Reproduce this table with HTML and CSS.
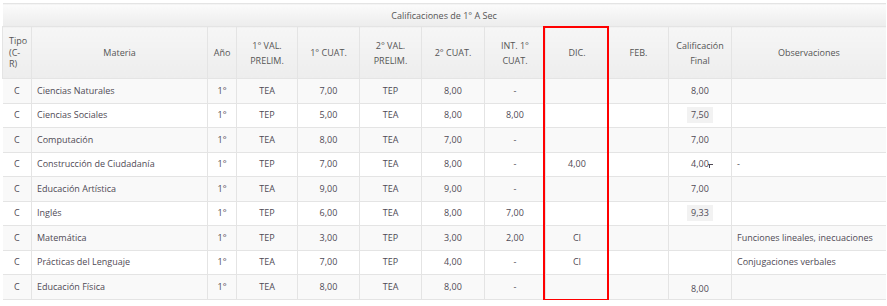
FILE: index.html
```html
<!DOCTYPE html>
<html lang="es">
<head>
<meta charset="utf-8">
<title>Calificaciones</title>
<link rel="stylesheet" href="styles.css">
</head>
<body>
<div class="wrap">
  <table class="grades">
    <colgroup>
      <col class="c-tipo"><col class="c-materia"><col class="c-anio"><col class="c-n1"><col class="c-n2"><col class="c-n3"><col class="c-n4"><col class="c-n5"><col class="c-n6"><col class="c-n7"><col class="c-n8"><col class="c-obs">
    </colgroup>
    <thead>
      <tr class="title-row"><th colspan="12">Calificaciones de 1° A Sec</th></tr>
      <tr class="head-row">
        <th class="tipo-h">Tipo<br>(C-<br>R)</th>
        <th>Materia</th>
        <th>Año</th>
        <th>1° VAL.<br>PRELIM.</th>
        <th>1° CUAT.</th>
        <th>2° VAL.<br>PRELIM.</th>
        <th>2° CUAT.</th>
        <th>INT. 1°<br>CUAT.</th>
        <th>DIC.</th>
        <th>FEB.</th>
        <th>Calificación<br>Final</th>
        <th>Observaciones</th>
      </tr>
    </thead>
    <tbody>
      <tr><td>C</td><td class="left">Ciencias Naturales</td><td>1°</td><td>TEA</td><td>7,00</td><td>TEP</td><td>8,00</td><td>-</td><td></td><td></td><td class="final"><span class="hl">8,00</span></td><td class="left"></td></tr>
      <tr><td>C</td><td class="left">Ciencias Sociales</td><td>1°</td><td>TEP</td><td>5,00</td><td>TEA</td><td>8,00</td><td>8,00</td><td></td><td></td><td class="final"><span class="hl box">7,50</span></td><td class="left"></td></tr>
      <tr><td>C</td><td class="left">Computación</td><td>1°</td><td>TEA</td><td>8,00</td><td>TEA</td><td>7,00</td><td>-</td><td></td><td></td><td class="final"><span class="hl">7,00</span></td><td class="left"></td></tr>
      <tr><td>C</td><td class="left">Construcción de Ciudadanía</td><td>1°</td><td>TEP</td><td>7,00</td><td>TEA</td><td>8,00</td><td>-</td><td>4,00</td><td></td><td class="final"><span class="hl cursor-host">4,00<span class="caret"></span></span></td><td class="left">-</td></tr>
      <tr><td>C</td><td class="left">Educación Artística</td><td>1°</td><td>TEA</td><td>9,00</td><td>TEA</td><td>9,00</td><td>-</td><td></td><td></td><td class="final"><span class="hl">7,00</span></td><td class="left"></td></tr>
      <tr><td>C</td><td class="left">Inglés</td><td>1°</td><td>TEP</td><td>6,00</td><td>TEA</td><td>8,00</td><td>7,00</td><td></td><td></td><td class="final"><span class="hl box">9,33</span></td><td class="left"></td></tr>
      <tr><td>C</td><td class="left">Matemática</td><td>1°</td><td>TEP</td><td>3,00</td><td>TEP</td><td>3,00</td><td>2,00</td><td>CI</td><td></td><td class="final"></td><td class="left">Funciones lineales, inecuaciones</td></tr>
      <tr><td>C</td><td class="left">Prácticas del Lenguaje</td><td>1°</td><td>TEA</td><td>7,00</td><td>TEP</td><td>4,00</td><td>-</td><td>CI</td><td></td><td class="final"></td><td class="left">Conjugaciones verbales</td></tr>
      <tr><td>C</td><td class="left">Educación Física</td><td>1°</td><td>TEA</td><td>8,00</td><td>TEA</td><td>8,00</td><td>-</td><td></td><td></td><td class="final"><span class="hl low">8,00</span></td><td class="left"></td></tr>
    </tbody>
  </table>
  <div class="dic-mark"></div>
</div>
</body>
</html>
```
FILE: styles.css
```css
html, body {
  margin: 0;
  padding: 0;
  background: #ffffff;
}
body {
  font-family: "Open Sans", "Liberation Sans", sans-serif;
  font-size: 9px;
  color: #4f4a55;
}
.wrap {
  position: relative;
  padding: 3px 2px 0 2px;
}
.grades {
  width: 883px;
  border-collapse: collapse;
  table-layout: fixed;
}
.c-tipo { width: 29px; }
.c-materia { width: 176px; }
.c-anio { width: 29px; }
.c-n1 { width: 61px; }
.c-n2 { width: 62px; }
.c-n3 { width: 62px; }
.c-n4 { width: 63px; }
.c-n5 { width: 61px; }
.c-n6 { width: 63px; }
.c-n7 { width: 60px; }
.c-n8 { width: 63px; }
.c-obs { width: 154px; }

.grades th, .grades td {
  border: 1px solid #e4e4e4;
  text-align: center;
  vertical-align: middle;
  padding: 0 4px;
  font-weight: normal;
}
.title-row th {
  height: 22px;
  font-size: 9px;
  background: linear-gradient(#fbfbfb, #ececec);
  border-left: none;
  border-right: none;
  color: #555;
}
.head-row th {
  height: 51px;
  line-height: 15px;
  background: linear-gradient(#f6f6f6, #ededed);
  color: #555;
  border-top: 1px solid #dadada;
}
.head-row th.tipo-h {
  line-height: 11.5px;
  text-align: left;
  padding-left: 6px;
}
.grades tbody td {
  height: 23.5px;
  line-height: 12px;
}
.grades tbody tr:nth-child(odd) td {
  background: #f9f9f9;
}
.grades tbody tr:nth-child(even) td {
  background: #ffffff;
}
.grades td.left {
  text-align: left;
  padding-left: 5px;
}
.grades tbody tr td:first-child {
  border-left: none;
}
.grades tr th:last-child, .grades tr td:last-child {
  border-right: none;
}
.hl {
  display: inline-block;
  padding: 2px 4px;
}
.hl.box {
  background: #f2f2f2;
}
.hl.low {
  position: relative;
  top: 2px;
}
.cursor-host {
  position: relative;
}
.caret {
  position: absolute;
  right: 0;
  top: 8px;
  width: 5px;
  height: 4px;
  border-top: 1px solid #4f4a55;
}
.caret::after {
  content: "";
  position: absolute;
  left: 1px;
  top: 0;
  width: 1px;
  height: 3px;
  background: #4f4a55;
}
.dic-mark {
  position: absolute;
  left: 543px;
  top: 26px;
  width: 62px;
  height: 271px;
  border: 2px solid #ff0000;
  pointer-events: none;
}
```
